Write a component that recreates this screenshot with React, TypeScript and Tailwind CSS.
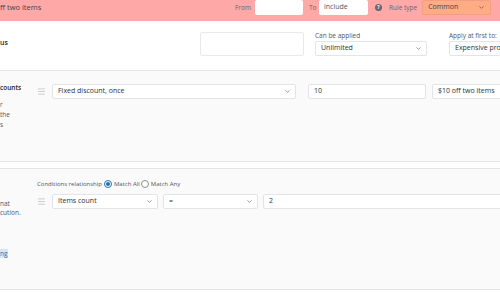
import { ChevronDown, Menu } from "lucide-react"

function Select({ label, w, className = "" }: { label: string; w: string; className?: string }) {
  return (
    <div className={`${w} shrink-0 h-[15px] bg-white border border-[#e2e4e7] rounded-[2px] flex items-center pl-[5px] pr-[4px] text-[7px] text-[#2c3338] ${className}`}>
      <span className="flex-1 overflow-hidden">{label}</span>
      <ChevronDown className="w-[7px] h-[7px] text-[#50575e]" strokeWidth={2} />
    </div>
  )
}

function Input({ value, w, className = "" }: { value: string; w: string; className?: string }) {
  return (
    <div className={`${w} shrink-0 h-[15px] bg-white border border-[#e2e4e7] rounded-[2px] flex items-center pl-[5px] text-[7px] text-[#2c3338] overflow-hidden whitespace-nowrap ${className}`}>
      {value}
    </div>
  )
}

export default function App() {
  return (
    <div className="w-[500px] h-[293px] overflow-hidden bg-white text-[#3c434a] font-['Open_Sans',sans-serif]">
      {/* rule header */}
      <div className="h-[21px] bg-[#ffa8a8] flex items-start whitespace-nowrap">
        <div className="w-[235px] shrink-0 h-[15px] flex items-center text-[7.5px] text-[#3c434a]">ff two items</div>
        <span className="w-[20px] shrink-0 h-[15px] flex items-center text-[6.5px] text-[#646970]">From</span>
        <div className="w-[48px] shrink-0 h-[15px] bg-white rounded-[2px]" />
        <span className="ml-[6px] w-[10px] shrink-0 h-[15px] flex items-center text-[6.5px] text-[#646970]">To</span>
        <div className="w-[49px] shrink-0 h-[15px] bg-white rounded-[2px] flex items-center pl-[5px] text-[7px] text-[#50575e]">include</div>
        <div className="ml-[7px] shrink-0 h-[15px] flex items-center">
          <span className="w-[7px] h-[7px] rounded-full bg-[#646970] text-white text-[5px] font-bold flex items-center justify-center leading-none">?</span>
        </div>
        <span className="ml-[7px] shrink-0 h-[15px] flex items-center text-[6.5px] text-[#646970]">Rule type</span>
        <div className="ml-[5px] w-[69px] shrink-0 h-[15px] bg-[#ffab84] border border-[#f0a080] rounded-[2px] flex items-center pl-[5px] pr-[5px] text-[7px] text-[#3c434a]">
          <span className="flex-1">Common</span>
          <ChevronDown className="w-[7px] h-[7px]" strokeWidth={2} />
        </div>
      </div>

      {/* rule settings row */}
      <div className="h-[50px] border-b border-[#e6e6e6] flex whitespace-nowrap">
        <div className="w-[200px] shrink-0 pt-[17px] text-[7px] font-semibold text-[#1d2327]">us</div>
        <div className="mt-[11px] w-[104px] shrink-0 h-[24px] border border-[#e8e9eb] rounded-[2px]" />
        <div className="ml-[11px] mt-[11px] shrink-0 flex flex-col gap-[1px]">
          <span className="text-[6.5px] leading-[8px] text-[#50575e]">Can be applied</span>
          <Select label="Unlimited" w="w-[112px]" />
        </div>
        <div className="ml-[22px] mt-[11px] shrink-0 flex flex-col gap-[1px]">
          <span className="text-[6.5px] leading-[8px] text-[#50575e]">Apply at first to:</span>
          <Select label="Expensive products" w="w-[112px]" />
        </div>
      </div>

      {/* discounts section */}
      <div className="h-[91px] bg-[#fafafa] border-b border-[#e6e6e6] flex whitespace-nowrap">
        <div className="w-[37px] shrink-0 pt-[12px] text-[6.5px] leading-[10px]">
          <div className="font-semibold text-[#1d2327]">counts</div>
          <div className="mt-[7px] text-[#50575e]">r</div>
          <div className="text-[#50575e]">the</div>
          <div className="text-[#50575e]">s</div>
        </div>
        <div className="pt-[13px] flex items-start">
          <Menu className="mt-[3px] w-[9px] h-[9px] shrink-0 text-[#a7aaad]" strokeWidth={1.5} />
          <Select label="Fixed discount, once" w="w-[244px]" className="ml-[6px]" />
          <Input value="10" w="w-[118px]" className="ml-[12px]" />
          <Input value="$10 off two items" w="w-[90px]" className="ml-[6px]" />
        </div>
      </div>

      <div className="h-[6px]" />

      {/* conditions section */}
      <div className="h-[122px] bg-[#fafafa] border-t border-b border-[#e6e6e6] flex whitespace-nowrap">
        <div className="w-[37px] shrink-0 pt-[30px] text-[6.5px] leading-[9px] text-[#50575e]">
          <div>nat</div>
          <div>cution.</div>
          <div className="mt-[32px] text-[#2271b1] bg-[#d4e6f7] w-fit">ng</div>
        </div>
        <div className="pt-[10px] flex flex-col">
          <div className="flex items-center h-[10px] text-[6px] text-[#50575e]">
            <span>Conditions relationship</span>
            <span className="ml-[2px] w-[8px] h-[8px] rounded-full border border-[#2271b1] bg-white flex items-center justify-center">
              <span className="w-[4px] h-[4px] rounded-full bg-[#2271b1]" />
            </span>
            <span className="ml-[2px]">Match All</span>
            <span className="ml-[1px] w-[8px] h-[8px] rounded-full border border-[#8c8f94] bg-white" />
            <span className="ml-[2px]">Match Any</span>
          </div>
          <div className="mt-[5px] flex items-start">
            <Menu className="mt-[3px] w-[9px] h-[9px] shrink-0 text-[#a7aaad]" strokeWidth={1.5} />
            <Select label="Items count" w="w-[106px]" className="ml-[6px]" />
            <Select label="=" w="w-[95px]" className="ml-[5px]" />
            <Input value="2" w="w-[260px]" className="ml-[5px]" />
          </div>
        </div>
      </div>
    </div>
  )
}
